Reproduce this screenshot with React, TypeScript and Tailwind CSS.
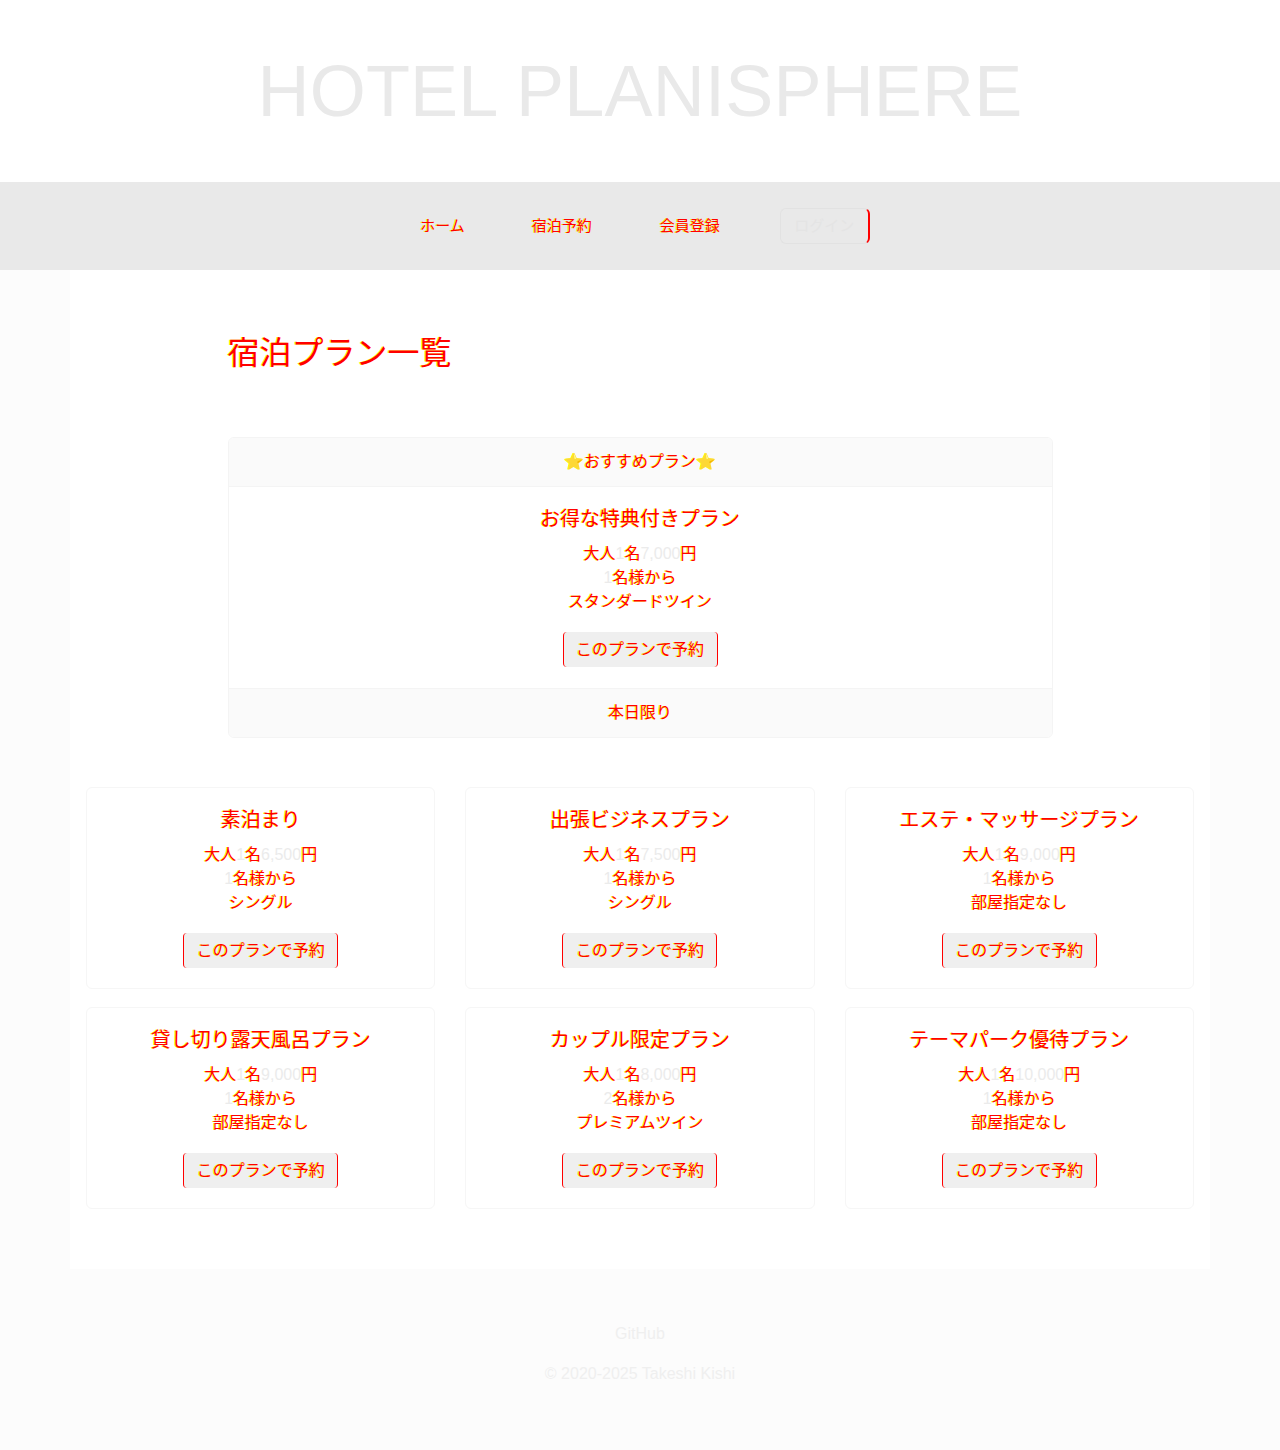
import React from "react";

type Plan = {
	name: string;
	price: string;
	min: string;
	room: string;
};

const plans: Plan[] = [
	{ name: "素泊まり", price: "6,500", min: "1", room: "シングル" },
	{ name: "出張ビジネスプラン", price: "7,500", min: "1", room: "シングル" },
	{ name: "エステ・マッサージプラン", price: "9,000", min: "1", room: "部屋指定なし" },
	{ name: "貸し切り露天風呂プラン", price: "9,000", min: "1", room: "部屋指定なし" },
	{ name: "カップル限定プラン", price: "8,000", min: "2", room: "プレミアムツイン" },
	{ name: "テーマパーク優待プラン", price: "10,000", min: "1", room: "部屋指定なし" },
];

// japanese runs are drawn in the red/yellow tone, latin runs stay pale grey
function Jp({ text }: { text: string }) {
	const parts = text.split(/([\u2b50\u3000-\u9fff\uff00-\uffef]+)/);
	return (
		<>
			{parts.map((part, i) =>
				part === "" ? null : /[\u2b50\u3000-\u9fff\uff00-\uffef]/.test(part) ? (
					<span key={i} className="text-[#ff0000] [text-shadow:-1px_0_0_#ffff00]">
						{part}
					</span>
				) : (
					<span key={i} className="text-[#ebebeb]">
						{part}
					</span>
				),
			)}
		</>
	);
}

function ReserveButton() {
	return (
		<button className="mx-auto block h-[35px] w-[155px] rounded-[4px] border-x border-[#ff0000] bg-[#efefef] text-[16px] leading-none">
			<Jp text="このプランで予約" />
		</button>
	);
}

function PlanBody({ plan }: { plan: Plan }) {
	return (
		<div className="text-center">
			<h5 className="mb-[11px] text-[20px] leading-[24px]">
				<Jp text={plan.name} />
			</h5>
			<ul className="text-[16px] leading-[24px]">
				<li>
					<Jp text={`大人1名${plan.price}円`} />
				</li>
				<li>
					<Jp text={`${plan.min}名様から`} />
				</li>
				<li>
					<Jp text={plan.room} />
				</li>
			</ul>
			<div className="mt-[18px]">
				<ReserveButton />
			</div>
		</div>
	);
}

export default function App() {
	return (
		<div className="min-h-[1450px] bg-[#fcfcfc] font-['Liberation_Sans','Noto_Sans_CJK_JP',sans-serif] text-[#ebebeb]">
			<header className="flex h-[182px] items-center justify-center bg-white">
				<h1 className="text-[72px] leading-none tracking-[0.2px] text-[#e9e9e9]">
					HOTEL PLANISPHERE
				</h1>
			</header>

			<nav className="flex h-[88px] items-center justify-center bg-[#e9e9e9] pl-[10px] text-[15px]">
				<a className="leading-[20px]">
					<Jp text="ホーム" />
				</a>
				<a className="ml-[67px] leading-[20px]">
					<Jp text="宿泊予約" />
				</a>
				<a className="ml-[68px] leading-[20px]">
					<Jp text="会員登録" />
				</a>
				<a className="ml-[60px] flex h-[36px] w-[90px] items-center justify-center rounded-[6px] border border-[#e2e2e2] border-r-2 border-r-[#ff0000] leading-[20px] text-[#e4e4e4]">
					ログイン
				</a>
			</nav>

			<main className="mx-auto w-[1140px] bg-white px-4 pt-[64px] pb-[60px]">
				<div className="mx-auto w-[825px]">
					<h2 className="text-[32px] leading-[38px]">
						<Jp text="宿泊プラン一覧" />
					</h2>

					<div className="mt-[65px] overflow-hidden rounded-[6px] border border-[#f4f4f4]">
						<div className="border-b border-[#f4f4f4] bg-[#fafafa] py-3 text-center text-[16px] leading-[24px]">
							<Jp text="⭐おすすめプラン⭐" />
						</div>
						<div className="px-5 pt-5 pb-[21px]">
							<PlanBody
								plan={{ name: "お得な特典付きプラン", price: "7,000", min: "1", room: "スタンダードツイン" }}
							/>
						</div>
						<div className="border-t border-[#f4f4f4] bg-[#fafafa] py-3 text-center text-[16px] leading-[24px]">
							<Jp text="本日限り" />
						</div>
					</div>
				</div>

				<div className="mt-[49px] grid grid-cols-3 gap-x-[30px] gap-y-[18px]">
					{plans.map((plan) => (
						<div
							key={plan.name}
							className="rounded-[6px] border border-[#f6f6f6] bg-white px-5 pt-5 pb-5"
						>
							<PlanBody plan={plan} />
						</div>
					))}
				</div>
			</main>

			<footer className="pt-[53px] text-center text-[16px] leading-[24px] text-[#efefef]">
				<p>GitHub</p>
				<p className="mt-4">© 2020-2025 Takeshi Kishi</p>
			</footer>
		</div>
	);
}
